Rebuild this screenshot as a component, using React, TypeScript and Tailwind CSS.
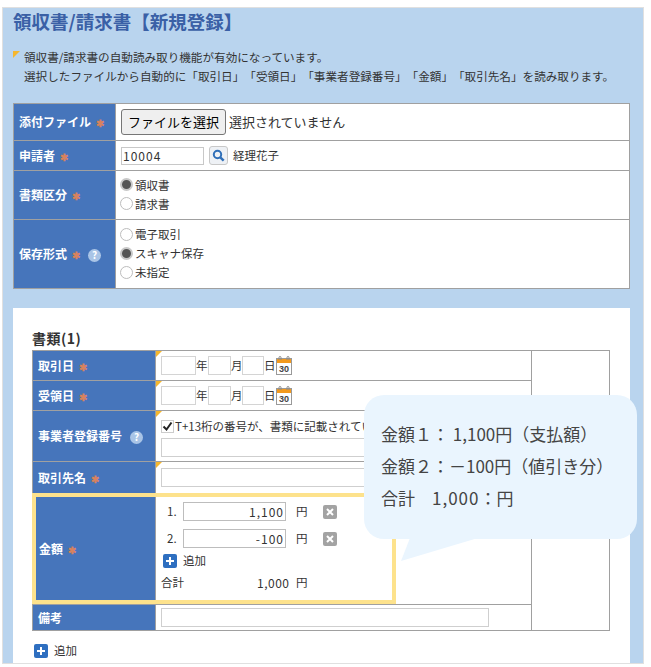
const FONT = { fontFamily: '"Noto Sans CJK JP", "Noto Sans", sans-serif' };

const Req = () => <span className="ml-[5px] text-[10px] font-bold text-[#d8825f]">✱</span>;

const HelpIcon = () => (
  <span className="ml-[8px] inline-flex h-[13px] w-[13px] items-center justify-center rounded-full bg-[#a9c4e6] text-[10px] font-bold leading-none text-white">
    ?
  </span>
);

const Corner = () => (
  <span className="absolute left-0 top-0 h-0 w-0 border-r-[6px] border-t-[6px] border-r-transparent border-t-[#f5b72f]" />
);

const Radio = ({ label, checked }: { label: string; checked?: boolean }) => (
  <label className="flex h-[19px] items-center text-[11.5px] leading-none text-[#333]">
    <input
      type="radio"
      readOnly
      checked={!!checked}
      className="mb-[2px] mr-[2px] h-[13px] w-[13px] appearance-none rounded-full border border-[#bdbdbd] bg-white checked:border-[2px] checked:border-[#c8c8c8] checked:bg-[#555]"
    />
    {label}
  </label>
);

const Calendar = () => (
  <svg width="16" height="19" viewBox="0 0 16 19" className="shrink-0">
    <rect x="0.5" y="2.5" width="15" height="16" fill="#fff" stroke="#999" />
    <rect x="1" y="3" width="14" height="4" fill="#f39a1e" />
    <path d="M3 4V1.5a1 1 0 0 1 2 0V4M11 4V1.5a1 1 0 0 1 2 0V4" fill="none" stroke="#888" />
    <text x="8" y="16" textAnchor="middle" fontSize="9" fontWeight="700" fill="#444" fontFamily="Liberation Sans">
      30
    </text>
  </svg>
);

const DateField = () => (
  <div className="flex items-center text-[11.5px] text-[#333]">
    <input className="h-[19px] w-[35px] border border-[#d4d4d4] bg-white" />
    <span className="w-[12px]">年</span>
    <input className="h-[19px] w-[23px] border border-[#d4d4d4] bg-white" />
    <span className="w-[11px]">月</span>
    <input className="h-[19px] w-[22px] border border-[#d4d4d4] bg-white" />
    <span className="w-[12px]">日</span>
    <Calendar />
  </div>
);

const AddLink = () => (
  <div className="flex items-center text-[11.5px] text-[#333]">
    <span className="mr-[6px] flex h-[14px] w-[14px] items-center justify-center rounded-[2px] bg-[#2e6fc0]">
      <svg width="10" height="10" viewBox="0 0 10 10">
        <path d="M5 1v8M1 5h8" stroke="#fff" strokeWidth="2" />
      </svg>
    </span>
    追加
  </div>
);

const DeleteIcon = () => (
  <span className="flex h-[14px] w-[14px] items-center justify-center rounded-[2px] bg-[#a3a3a3]">
    <svg width="10" height="10" viewBox="0 0 10 10">
      <path d="M2 2l6 6M8 2l-6 6" stroke="#fff" strokeWidth="2" />
    </svg>
  </span>
);

const AmountRow = ({ no, value }: { no: string; value: string }) => (
  <div className="flex h-[27px] items-center text-[11.5px] text-[#333]">
    <span className="ml-[6px] w-[16px]">{no}</span>
    <input
      readOnly
      value={value}
      className="h-[19px] w-[103px] border border-[#bdbdbd] bg-white px-[1px] text-right text-[12px] tracking-[1px]"
    />
    <span className="ml-[10px] w-[27px]">円</span>
    <DeleteIcon />
  </div>
);

const labelCell = "border border-[#a0a0a0] bg-[#4675bb] pl-[5px] text-left text-[12px] font-bold text-white";
const valueTop = "border border-[#a0a0a0] bg-white pl-[4px] align-middle";
const valueDoc = "relative border border-[#a0a0a0] bg-white pl-[5px] align-middle";

export default function App() {
  return (
    <div style={FONT} className="relative h-[667px] w-[651px] overflow-hidden bg-white [text-spacing-trim:space-all]">
      <div className="absolute left-[2px] top-[7px] h-[657px] w-[642px] border border-[#e0e0e0] bg-[#b9d4ee] px-[10px]">
        <h1 className="h-[27px] text-[18.5px] font-bold leading-[27px] text-[#3a60a6]">
          領収書/請求書【新規登録】
        </h1>

        <div className="relative mt-[13px] pl-[11px] text-[11.6px] leading-[19px] text-[#333]">
          <span className="absolute left-0 top-[3px] h-0 w-0 border-r-[7px] border-t-[7px] border-r-transparent border-t-[#f5b72f]" />
          <p>領収書/請求書の自動読み取り機能が有効になっています。</p>
          <p>選択したファイルから自動的に「取引日」「受領日」「事業者登録番号」「金額」「取引先名」を読み取ります。</p>
        </div>

        <table className="mt-[17px] w-[617px] table-fixed border-collapse">
          <colgroup>
            <col className="w-[102px]" />
            <col />
          </colgroup>
          <tbody>
            <tr className="h-[37px]">
              <th className={labelCell}>
                添付ファイル
                <Req />
              </th>
              <td className={valueTop}>
                <div className="flex items-center pl-[1px] text-[13px] text-[#333]">
                  <button className="h-[26px] w-[105px] rounded-[3px] border border-[#767676] bg-[#efefef] text-[13px] text-black">
                    ファイルを選択
                  </button>
                  <span className="ml-[3px]">選択されていません</span>
                </div>
              </td>
            </tr>
            <tr className="h-[30px]">
              <th className={labelCell}>
                申請者
                <Req />
              </th>
              <td className={valueTop}>
                <div className="flex items-center pl-[1px] text-[11.5px] text-[#333]">
                  <input
                    readOnly
                    value="10004"
                    className="h-[18px] w-[83px] border border-[#c8c8c8] bg-white pl-[1px] text-[12px] tracking-[1px]"
                  />
                  <span className="ml-[5px] flex h-[19px] w-[19px] items-center justify-center rounded-[3px] border border-[#c8c8c8] bg-[#eef1f5]">
                    <svg width="13" height="13" viewBox="0 0 13 13">
                      <circle cx="5.5" cy="5.5" r="3.7" fill="none" stroke="#2f6fb8" strokeWidth="2" />
                      <path d="M8.3 8.3l3.4 3.4" stroke="#2f6fb8" strokeWidth="2.4" />
                    </svg>
                  </span>
                  <span className="ml-[5px]">経理花子</span>
                </div>
              </td>
            </tr>
            <tr className="h-[49px]">
              <th className={labelCell}>
                書類区分
                <Req />
              </th>
              <td className={valueTop}>
                <Radio label="領収書" checked />
                <Radio label="請求書" />
              </td>
            </tr>
            <tr className="h-[69px]">
              <th className={labelCell}>
                保存形式
                <Req />
                <HelpIcon />
              </th>
              <td className={valueTop}>
                <Radio label="電子取引" />
                <Radio label="スキャナ保存" checked />
                <Radio label="未指定" />
              </td>
            </tr>
          </tbody>
        </table>

        <div className="mt-[19px] h-[355px] w-[617px] bg-white pl-[19px]">
          <h2 className="pt-[19px] text-[14px] font-bold leading-[22px] tracking-[0.5px] text-[#333]">書類(1)</h2>
          <div className="relative mt-[1px] w-[578px]">
            <table className="w-[578px] table-fixed border-collapse">
              <colgroup>
                <col className="w-[123px]" />
                <col className="w-[376px]" />
                <col />
              </colgroup>
              <tbody>
                <tr className="h-[30px]">
                  <th className={labelCell}>
                    取引日
                    <Req />
                  </th>
                  <td className={valueDoc}>
                    <Corner />
                    <DateField />
                  </td>
                  <td rowSpan={6} className="border border-[#a0a0a0] bg-white" />
                </tr>
                <tr className="h-[30px]">
                  <th className={labelCell}>
                    受領日
                    <Req />
                  </th>
                  <td className={valueDoc}>
                    <Corner />
                    <DateField />
                  </td>
                </tr>
                <tr className="h-[51px]">
                  <th className={labelCell}>
                    事業者登録番号
                    <HelpIcon />
                  </th>
                  <td className={valueDoc}>
                    <Corner />
                    <label className="flex h-[22px] items-center text-[11.5px] text-[#333]">
                      <span className="mr-[1px] flex h-[13px] w-[13px] items-center justify-center border border-[#ccc] bg-white">
                        <svg width="11" height="11" viewBox="0 0 11 11">
                          <path d="M1.5 5.5l3 3 5-7" fill="none" stroke="#222" strokeWidth="2" />
                        </svg>
                      </span>
                      T+13桁の番号が、書類に記載されています
                    </label>
                    <input className="block h-[19px] w-[328px] border border-[#cfcfcf] bg-white" />
                  </td>
                </tr>
                <tr className="h-[32px]">
                  <th className={labelCell}>
                    取引先名
                    <Req />
                  </th>
                  <td className={valueDoc}>
                    <Corner />
                    <input className="block h-[19px] w-[328px] border border-[#cfcfcf] bg-white" />
                  </td>
                </tr>
                <tr className="h-[111px]">
                  <th className={labelCell}>
                    <span className="pl-[1px]">金額</span>
                    <Req />
                  </th>
                  <td className={`${valueDoc} !align-top pt-[4px]`}>
                    <AmountRow no="1." value="1,100" />
                    <AmountRow no="2." value="-100" />
                    <div className="mt-[-1px] flex h-[20px] items-center pl-[2px]">
                      <AddLink />
                    </div>
                    <div className="mt-[4px] flex h-[16px] items-center text-[11.5px] text-[#333]">
                      <span className="w-[96px]">合計</span>
                      <span className="w-[28px] text-right text-[12px] tracking-[0.5px]">1,000</span>
                      <span className="ml-[11px]">円</span>
                    </div>
                  </td>
                </tr>
                <tr className="h-[26px]">
                  <th className={labelCell}>備考</th>
                  <td className={valueDoc}>
                    <input className="block h-[19px] w-[328px] border border-[#cfcfcf] bg-white" />
                  </td>
                </tr>
              </tbody>
            </table>
            {/* 金額の行を囲む黄色い強調枠 */}
            <div className="pointer-events-none absolute left-0 top-[143px] h-[111px] w-[364px] border-[4px] border-[#fde28c]" />
          </div>
          <div className="mt-[11px] pl-[2px]">
            <AddLink />
          </div>
        </div>
      </div>

      {/* 吹き出し */}
      <div className="absolute left-[364px] top-[395px] h-[144px] w-[273px] rounded-[20px] bg-[#eaf5fe] pl-[17px] pt-[23px] text-[17px] leading-[32px] text-[#444]">
        <p>金額１： 1,100円（支払額）</p>
        <p>金額２：－100円（値引き分）</p>
        <p>
          合計　<span className="tracking-[1px]">1,000</span>：円
        </p>
      </div>
      <svg className="absolute left-[400px] top-[538px]" width="80" height="24" viewBox="0 0 80 24">
        <path d="M10 0L1 23L78 0Z" fill="#eaf5fe" />
      </svg>
    </div>
  );
}
